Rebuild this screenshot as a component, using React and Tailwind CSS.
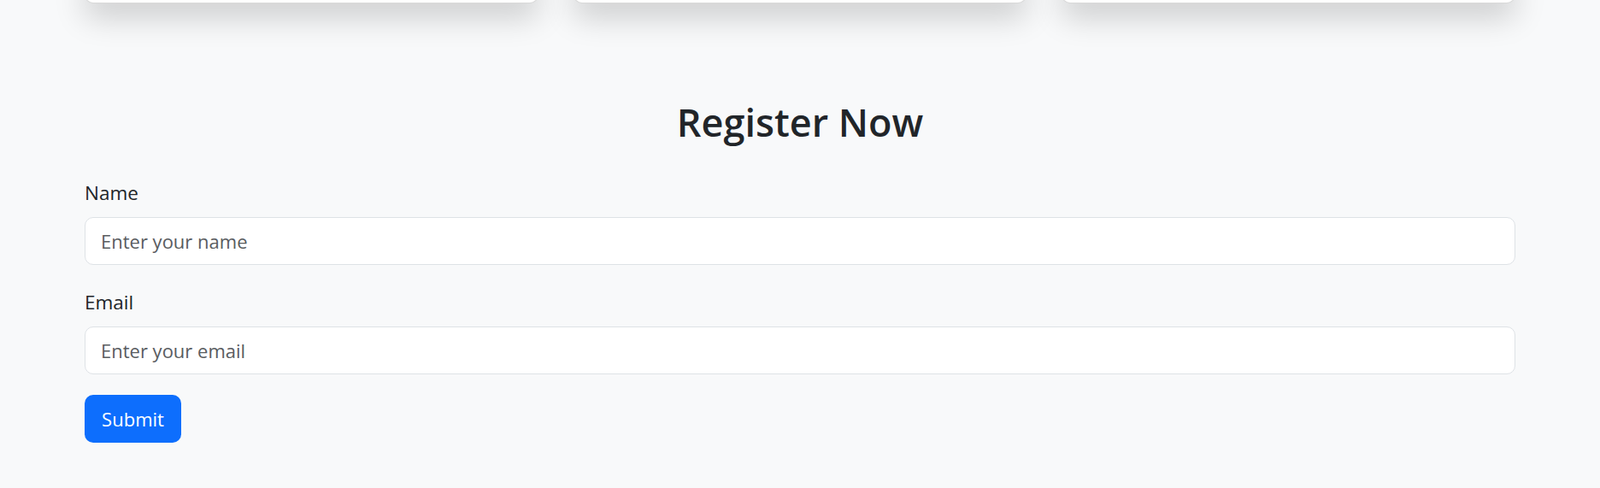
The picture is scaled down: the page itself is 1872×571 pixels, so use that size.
export default function App() {
  return (
    <div
      className="min-h-[571px] w-full overflow-hidden bg-[#f8f9fa] text-[#212529]"
      style={{ fontFamily: '"Open Sans", "Noto Sans", Arial, sans-serif' }}
    >
      <div className="mx-auto w-[1674px]">
        {/* feature cards above, only their bottom edge is visible */}
        <div className="-mt-[36px] grid grid-cols-3 gap-[41px]">
          <div className="h-[40px] rounded-[10px] border border-black/15 bg-white shadow-[0_16px_36px_rgba(0,0,0,0.18)]" />
          <div className="h-[40px] rounded-[10px] border border-black/15 bg-white shadow-[0_16px_36px_rgba(0,0,0,0.18)]" />
          <div className="h-[40px] rounded-[10px] border border-black/15 bg-white shadow-[0_16px_36px_rgba(0,0,0,0.18)]" />
        </div>

        <section className="pt-[111px] pb-[54px]">
          <h2 className="mb-[35px] text-center text-[45px] leading-[56px] font-semibold">Register Now</h2>

          <form onSubmit={(e) => e.preventDefault()}>
            <div className="mb-[24px]">
              <label htmlFor="name" className="mb-[8px] block text-[22.5px] leading-[40px]">
                Name
              </label>
              <input
                id="name"
                type="text"
                placeholder="Enter your name"
                className="block h-[56px] w-full rounded-[10px] border border-[#dee2e6] bg-white px-[18px] text-[22px] outline-none placeholder:text-[#595c5f]"
              />
            </div>
            <div className="mb-[24px]">
              <label htmlFor="email" className="mb-[8px] block text-[22.5px] leading-[40px]">
                Email
              </label>
              <input
                id="email"
                type="email"
                placeholder="Enter your email"
                className="block h-[56px] w-full rounded-[10px] border border-[#dee2e6] bg-white px-[18px] text-[22px] outline-none placeholder:text-[#595c5f]"
              />
            </div>
            <button
              type="submit"
              className="h-[56px] w-[113px] rounded-[10px] bg-[#0d6efd] text-[22px] text-white"
            >
              Submit
            </button>
          </form>
        </section>
      </div>
    </div>
  )
}
